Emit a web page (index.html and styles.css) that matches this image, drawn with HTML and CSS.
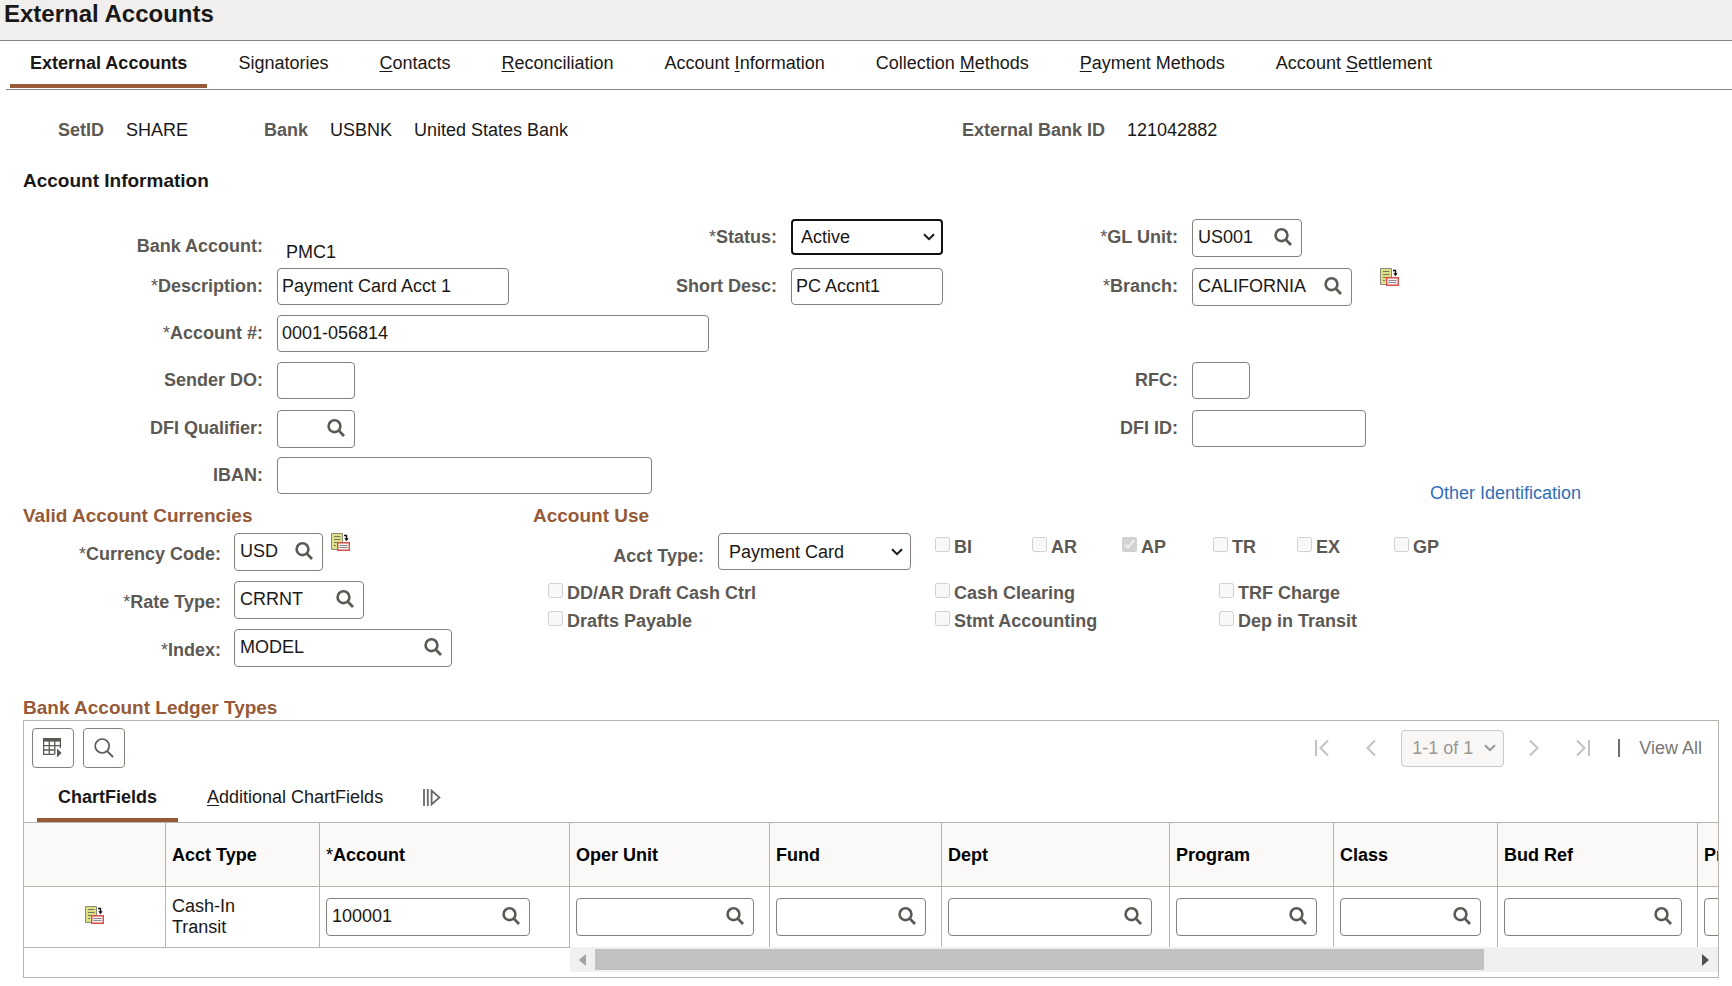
FILE: index.html
```html
<!DOCTYPE html>
<html lang="en">
<head>
<meta charset="utf-8">
<title>External Accounts</title>
<link rel="stylesheet" href="styles.css">
</head>
<body>
<svg class="sprite" aria-hidden="true">
  <symbol id="i-search" viewBox="0 0 18 18"><circle cx="7.5" cy="7.2" r="5.9" fill="none" stroke="currentColor" stroke-width="2.6"/><path d="M11.6 11.4 17 17" fill="none" stroke="currentColor" stroke-width="2.8"/></symbol>
  <symbol id="i-find" viewBox="0 0 20 20"><circle cx="8.2" cy="8" r="7" fill="none" stroke="currentColor" stroke-width="1.7"/><path d="M13.2 13.2 19 19" fill="none" stroke="currentColor" stroke-width="1.9"/></symbol>
  <symbol id="i-chevron" viewBox="0 0 12 8"><path d="M1 1.2 6 6.2 11 1.2" fill="none" stroke="currentColor" stroke-width="2"/></symbol>
  <symbol id="i-form" viewBox="0 0 19 18"><path d="M.5.5h11v16H.5z" fill="#dcdf86" stroke="#8a8a78"/><path d="M3 3.500h6.500M3 6.500h6.500M3 9.500h3M3 12.500h2" stroke="#77775a" stroke-width="1.1"/><path d="M13 2.500h2.500V6" fill="none" stroke="#111" stroke-width="1.4"/><path d="M13.300 5.200h4.400L15.500 8.200z" fill="#111"/><path d="M6.700 9.700h11.600v7.600H6.700z" fill="#f4f0f0" stroke="#d9504c" stroke-width="1.400"/><path d="M8.500 12.500h8M8.500 14.500h8" stroke="#8a898e" stroke-width="1"/></symbol>
  <symbol id="i-grid" viewBox="0 0 20 20"><path d="M0 0h18v3.600H0z" fill="currentColor"/><path d="M.6 3v13.400h10.600M17.400 3v7M6.300 3v13.400M11.800 3v13.400M0 7.600h18M0 12h12.500" fill="none" stroke="currentColor" stroke-width="1.300"/><path d="M14 10.600 18.600 15 14 19.600z" fill="currentColor"/></symbol>
</svg>

<header class="page-header"><h1>External Accounts</h1></header>

<nav class="tabs" aria-label="Pages">
  <a href="#" class="tab active" aria-current="page">External Accounts</a>
  <a href="#" class="tab">Signatories</a>
  <a href="#" class="tab"><u>C</u>ontacts</a>
  <a href="#" class="tab"><u>R</u>econciliation</a>
  <a href="#" class="tab">Account <u>I</u>nformation</a>
  <a href="#" class="tab">Collection <u>M</u>ethods</a>
  <a href="#" class="tab"><u>P</u>ayment Methods</a>
  <a href="#" class="tab">Account <u>S</u>ettlement</a>
</nav>

<main>
  <div class="keys">
    <div class="key"><span class="label">SetID</span><span>SHARE</span></div>
    <div class="key"><span class="label">Bank</span><span>USBNK</span><span>United States Bank</span></div>
    <div class="key"><span class="label">External Bank ID</span><span>121042882</span></div>
  </div>

  <h2 class="section-title">Account Information</h2>

  <div class="account-grid">
    <span class="label col-a low">Bank Account:</span>
    <span class="col-b static">PMC1</span>
    <label class="label col-c" for="status"><span class="req">*</span>Status:</label>
    <div class="select col-d focused"><select id="status"><option>Active</option><option>Inactive</option></select><svg class="chev"><use href="#i-chevron"/></svg></div>
    <label class="label col-e" for="glunit"><span class="req">*</span>GL Unit:</label>
    <div class="lookup col-f w-unit"><input id="glunit" type="text" value="US001"><button type="button" aria-label="Look up GL Unit"><svg><use href="#i-search"/></svg></button></div>

    <label class="label col-a" for="descr"><span class="req">*</span>Description:</label>
    <input class="text col-b" id="descr" type="text" value="Payment Card Acct 1">
    <label class="label col-c" for="short">Short Desc:</label>
    <input class="text col-d" id="short" type="text" value="PC Accnt1">
    <label class="label col-e" for="branch"><span class="req">*</span>Branch:</label>
    <div class="col-f with-icon">
      <div class="lookup w-branch"><input id="branch" type="text" value="CALIFORNIA"><button type="button" aria-label="Look up Branch"><svg><use href="#i-search"/></svg></button></div>
      <button type="button" class="form-btn" aria-label="Branch details"><svg><use href="#i-form"/></svg></button>
    </div>

    <label class="label col-a" for="acct"><span class="req">*</span>Account #:</label>
    <input class="text col-bc w-acct" id="acct" type="text" value="0001-056814">

    <label class="label col-a" for="sender">Sender DO:</label>
    <input class="text col-b w-short" id="sender" type="text">
    <label class="label col-e" for="rfc">RFC:</label>
    <input class="text col-f w-rfc" id="rfc" type="text">

    <label class="label col-a" for="dfiq">DFI Qualifier:</label>
    <div class="lookup col-b w-short"><input id="dfiq" type="text"><button type="button" aria-label="Look up DFI Qualifier"><svg><use href="#i-search"/></svg></button></div>
    <label class="label col-e" for="dfiid">DFI ID:</label>
    <input class="text col-f w-dfi" id="dfiid" type="text">

    <label class="label col-a" for="iban">IBAN:</label>
    <input class="text col-bc w-iban" id="iban" type="text">
    <a class="col-f other-id" href="#">Other Identification</a>
  </div>

  <div class="panels">
    <section>
      <h3 class="group-title">Valid Account Currencies</h3>
      <div class="currency-grid">
        <label class="label" for="cur"><span class="req">*</span>Currency Code:</label>
        <div class="with-icon near">
          <div class="lookup w-cur"><input id="cur" type="text" value="USD"><button type="button" aria-label="Look up Currency Code"><svg><use href="#i-search"/></svg></button></div>
          <button type="button" class="form-btn" aria-label="Currency details"><svg><use href="#i-form"/></svg></button>
        </div>
        <label class="label" for="rate"><span class="req">*</span>Rate Type:</label>
        <div class="lookup w-rate"><input id="rate" type="text" value="CRRNT"><button type="button" aria-label="Look up Rate Type"><svg><use href="#i-search"/></svg></button></div>
        <label class="label" for="index"><span class="req">*</span>Index:</label>
        <div class="lookup w-index"><input id="index" type="text" value="MODEL"><button type="button" aria-label="Look up Index"><svg><use href="#i-search"/></svg></button></div>
      </div>
    </section>

    <section>
      <h3 class="group-title">Account Use</h3>
      <div class="use-row">
        <label class="label" for="atype">Acct Type:</label>
        <div class="select"><select id="atype"><option>Payment Card</option></select><svg class="chev"><use href="#i-chevron"/></svg></div>
        <div class="flags">
          <label class="check"><input type="checkbox" disabled>BI</label>
          <label class="check"><input type="checkbox" disabled>AR</label>
          <label class="check"><input type="checkbox" disabled checked>AP</label>
          <label class="check"><input type="checkbox" disabled>TR</label>
          <label class="check"><input type="checkbox" disabled>EX</label>
          <label class="check"><input type="checkbox" disabled>GP</label>
        </div>
      </div>
      <div class="options">
        <label class="check"><input type="checkbox" disabled>DD/AR Draft Cash Ctrl</label>
        <label class="check"><input type="checkbox" disabled>Cash Clearing</label>
        <label class="check"><input type="checkbox" disabled>TRF Charge</label>
        <label class="check"><input type="checkbox" disabled>Drafts Payable</label>
        <label class="check"><input type="checkbox" disabled>Stmt Accounting</label>
        <label class="check"><input type="checkbox" disabled>Dep in Transit</label>
      </div>
    </section>
  </div>

  <section class="ledger">
    <h3 class="group-title">Bank Account Ledger Types</h3>
    <div class="ledger-box">
      <div class="toolbar">
        <button type="button" class="tool" aria-label="Grid actions"><svg><use href="#i-grid"/></svg></button>
        <button type="button" class="tool" aria-label="Find"><svg><use href="#i-find"/></svg></button>
        <div class="pager">
          <button type="button" class="page-btn" disabled aria-label="First"><svg viewBox="0 0 14 18"><path d="M1 1v16M13 1.500 5.500 9l7.500 7.500"/></svg></button>
          <button type="button" class="page-btn" disabled aria-label="Previous"><svg viewBox="0 0 14 18"><path d="M11 1.500 3.500 9l7.500 7.500"/></svg></button>
          <div class="select range"><select disabled aria-label="Rows"><option>1-1 of 1</option></select><svg class="chev"><use href="#i-chevron"/></svg></div>
          <button type="button" class="page-btn" disabled aria-label="Next"><svg viewBox="0 0 14 18"><path d="M3 1.500 10.500 9 3 16.500"/></svg></button>
          <button type="button" class="page-btn" disabled aria-label="Last"><svg viewBox="0 0 14 18"><path d="M13 1v16M1 1.500 8.500 9 1 16.500"/></svg></button>
          <span class="divider"></span>
          <button type="button" class="view-all" disabled>View All</button>
        </div>
      </div>
      <div class="grid-tabs">
        <a href="#" class="grid-tab active">ChartFields</a>
        <a href="#" class="grid-tab"><u>A</u>dditional ChartFields</a>
        <button type="button" class="expand" aria-label="Show all columns"><svg viewBox="0 0 18 17"><path d="M1 0v17M4.800 0v17M8.600 1.600v13.800L16.400 8.500z"/></svg></button>
      </div>
      <div class="table-wrap">
        <table>
          <colgroup><col class="c0"><col class="c1"><col class="c2"><col class="c3"><col class="c4"><col class="c5"><col class="c6"><col class="c6"><col class="c3"><col class="c3"></colgroup>
          <thead>
            <tr><th></th><th>Acct Type</th><th><span class="req">*</span>Account</th><th>Oper Unit</th><th>Fund</th><th>Dept</th><th>Program</th><th>Class</th><th>Bud Ref</th><th>Product</th></tr>
          </thead>
          <tbody>
            <tr>
              <td class="center"><button type="button" class="form-btn" aria-label="Row details"><svg><use href="#i-form"/></svg></button></td>
              <td>Cash-In<br>Transit</td>
              <td><div class="lookup w-t-acct"><input type="text" value="100001" aria-label="Account"><button type="button" aria-label="Look up Account"><svg><use href="#i-search"/></svg></button></div></td>
              <td><div class="lookup w-t-unit"><input type="text" aria-label="Oper Unit"><button type="button" aria-label="Look up Oper Unit"><svg><use href="#i-search"/></svg></button></div></td>
              <td><div class="lookup w-t-fund"><input type="text" aria-label="Fund"><button type="button" aria-label="Look up Fund"><svg><use href="#i-search"/></svg></button></div></td>
              <td><div class="lookup w-t-acct"><input type="text" aria-label="Dept"><button type="button" aria-label="Look up Dept"><svg><use href="#i-search"/></svg></button></div></td>
              <td><div class="lookup w-t-prog"><input type="text" aria-label="Program"><button type="button" aria-label="Look up Program"><svg><use href="#i-search"/></svg></button></div></td>
              <td><div class="lookup w-t-prog"><input type="text" aria-label="Class"><button type="button" aria-label="Look up Class"><svg><use href="#i-search"/></svg></button></div></td>
              <td><div class="lookup w-t-unit"><input type="text" aria-label="Bud Ref"><button type="button" aria-label="Look up Bud Ref"><svg><use href="#i-search"/></svg></button></div></td>
              <td><div class="lookup w-t-unit"><input type="text" aria-label="Product"><button type="button" aria-label="Look up Product"><svg><use href="#i-search"/></svg></button></div></td>
            </tr>
          </tbody>
        </table>
      </div>
      <div class="scroll-row">
        <div class="frozen-edge"></div>
        <div class="scrollbar">
          <svg class="arrow dim" viewBox="0 0 7 12"><path d="M7 0v12L0 6z"/></svg>
          <div class="track"><div class="thumb"></div></div>
          <svg class="arrow" viewBox="0 0 7 12"><path d="M0 0v12l7-6z"/></svg>
        </div>
      </div>
    </div>
  </section>
</main>
</body>
</html>
```

FILE: styles.css
```css
* { box-sizing: border-box; }

body {
  margin: 0;
  background: #fff;
  color: #1a1816;
  font: 18px/22px "Liberation Sans", Arial, sans-serif;
}

h1, h2, h3 { margin: 0; }

input, select, button { font: inherit; color: inherit; }

button {
  padding: 0;
  border: 0;
  background: none;
}

.sprite { display: none; }

.page-header {
  height: 41px;
  padding-left: 4px;
  border-bottom: 1px solid #84817e;
  background: #f0efed;
}

.page-header h1 {
  font-size: 24px;
  line-height: 28px;
}

.tabs {
  display: flex;
  gap: 11px;
  margin-left: 6px;
  padding: 0 4px 1px;
  border-bottom: 1px solid #84817e;
}

.tab {
  padding: 11px 20px 10px;
  border-bottom: 4px solid transparent;
  color: inherit;
  text-decoration: none;
  white-space: nowrap;
}

.tab.active, .grid-tab.active {
  border-color: #955a38;
  font-weight: bold;
}

.tab u, .grid-tab u { text-underline-offset: 2px; }

main { padding-left: 23px; }

.label {
  color: #5c5955;
  font-weight: bold;
}

.req { font-weight: normal; }

.keys {
  display: grid;
  grid-template-columns: 206fr 698fr 770fr;
  padding: 29px 0 0 35px;
}

.key {
  display: flex;
  gap: 22px;
  white-space: nowrap;
}

.section-title {
  margin: 29px 0 27px;
  font-size: 19px;
  line-height: 22px;
}

.account-grid {
  display: grid;
  grid-template-columns: 240fr 232fr 254fr 152fr 221fr 540fr;
  grid-template-rows: 49px 47px 47px 48px 47px 47px;
  column-gap: 14px;
  align-items: start;
}

.account-grid .label {
  line-height: 36px;
  text-align: right;
  white-space: nowrap;
}

.account-grid .low {
  align-self: end;
  line-height: 44px;
}

.static {
  align-self: end;
  padding-left: 9px;
  line-height: 32px;
}

.col-a { grid-column: 1; }
.col-b { grid-column: 2; }
.col-bc { grid-column: 2 / 4; }
.col-c { grid-column: 3; }
.col-d { grid-column: 4; }
.col-e { grid-column: 5; }
.col-f { grid-column: 6; }

.text, .lookup, .select select {
  width: 100%;
  height: 37px;
  border: 1px solid #85807b;
  border-radius: 4px;
  background: #fff;
}

.text { padding: 0 4px; }

.lookup {
  display: flex;
  align-items: center;
  height: 38px;
  padding: 0 9px 2px 5px;
}

.lookup input {
  flex: 1;
  min-width: 0;
  padding: 0;
  border: 0;
  background: none;
  outline: 0;
}

.lookup button {
  color: #5c5955;
  line-height: 0;
}

.lookup svg { width: 18px; height: 18px; }

.select {
  display: grid;
  align-items: center;
}

.select > * { grid-area: 1 / 1; }

.select select {
  appearance: none;
  padding: 0 10px;
  opacity: 1;
}

.select.focused select {
  height: 36px;
  padding: 0 8px;
  border: 2px solid #111;
}

.chev {
  width: 12px;
  height: 8px;
  margin-right: 8px;
  justify-self: end;
  pointer-events: none;
}

.with-icon {
  display: flex;
  gap: 28px;
  align-items: flex-start;
}

.with-icon.near { gap: 8px; }

.form-btn { line-height: 0; }
.form-btn svg { width: 19px; height: 18px; }

.w-unit { max-width: 110px; }
.w-branch { max-width: 160px; }
.w-acct { max-width: 432px; }
.w-short { max-width: 78px; }
.w-rfc { max-width: 58px; }
.w-dfi { max-width: 174px; }
.w-iban { max-width: 375px; }
.w-cur { max-width: 89px; }
.w-rate { max-width: 130px; }
.w-index { max-width: 218px; }
.w-t-acct { max-width: 204px; }
.w-t-unit { max-width: 178px; }
.w-t-fund { max-width: 150px; }
.w-t-prog { max-width: 141px; }

.other-id {
  align-self: end;
  justify-self: end;
  margin-right: 151px;
  color: #2f6eb6;
  text-decoration: none;
}

.panels {
  display: grid;
  grid-template-columns: 510fr 1199fr;
}

.group-title {
  color: #955a38;
  font-size: 19px;
  line-height: 24px;
}

.currency-grid {
  display: grid;
  grid-template-columns: 198px 1fr;
  gap: 10px 13px;
  align-items: center;
  margin-top: 5px;
}

.currency-grid .label {
  padding-top: 3px;
  text-align: right;
}

.use-row {
  display: grid;
  grid-template-columns: 171px 193px 1fr;
  column-gap: 14px;
  align-items: center;
  margin-top: 5px;
}

.use-row .label {
  padding-top: 8px;
  text-align: right;
}

.flags {
  display: grid;
  grid-template-columns: 97fr 90fr 91fr 84fr 97fr 338fr;
  align-self: start;
  padding: 4px 0 0 10px;
}

.options {
  display: grid;
  grid-template-columns: 387fr 284fr 513fr;
  row-gap: 8px;
  margin-top: 13px;
  padding-left: 15px;
}

.check {
  display: flex;
  gap: 4px;
  align-items: flex-start;
  color: #5c5955;
  font-weight: bold;
  line-height: 20px;
  white-space: nowrap;
}

.check input {
  width: 15px;
  height: 15px;
  margin: 0;
}

.ledger { margin: 29px 13px 7px 0; }

.ledger-box {
  padding-bottom: 5px;
  border: 1px solid #b9b3ae;
}

.toolbar {
  display: flex;
  gap: 9px;
  align-items: center;
  padding: 7px 16px 0 8px;
}

.tool {
  width: 42px;
  height: 40px;
  border: 1px solid #85807b;
  border-radius: 4px;
  color: #5c5955;
  line-height: 0;
}

.tool svg { width: 20px; height: 20px; }

.pager {
  display: flex;
  align-items: center;
  margin-left: auto;
}

.page-btn {
  margin-right: 35px;
  line-height: 0;
}

.page-btn svg {
  width: 14px;
  height: 18px;
  fill: none;
  stroke: #c4c2c0;
  stroke-width: 2;
}

.range {
  width: 103px;
  margin: 0 23px 0 -12px;
  color: #9a9794;
}

.range select {
  border-color: #cbc8c5;
  background: #f8f7f6;
}

.divider {
  width: 2px;
  height: 18px;
  margin: 0 19px 0 -7px;
  background: #6f6c69;
}

.view-all { color: #7a7774; }

.grid-tabs {
  display: flex;
  gap: 8px;
  align-items: center;
  height: 54px;
  padding: 4px 0 0 13px;
}

.grid-tab {
  height: 50px;
  padding: 14px 21px 0;
  border-bottom: 4px solid transparent;
  color: inherit;
  text-decoration: none;
}

.expand {
  margin-left: 11px;
  line-height: 0;
}

.expand svg {
  width: 18px;
  height: 17px;
  fill: none;
  stroke: #6b6865;
  stroke-width: 1.8;
}

.table-wrap { overflow: hidden; }

table {
  width: 1873px;
  table-layout: fixed;
  border-collapse: separate;
  border-spacing: 0;
}

.c0 { width: 141px; }
.c1 { width: 154px; }
.c2 { width: 250px; }
.c3 { width: 200px; }
.c4 { width: 172px; }
.c5 { width: 228px; }
.c6 { width: 164px; }

th, td {
  padding: 0 6px;
  border-top: 1px solid #b9b3ae;
  border-left: 1px solid #b9b3ae;
  text-align: left;
}

th:first-child, td:first-child { border-left: 0; }

th {
  height: 64px;
  background: #faf9f7;
  color: #000;
}

td {
  height: 61px;
  line-height: 21px;
}

.center { text-align: center; }

.scroll-row { display: flex; }

.frozen-edge {
  width: 546px;
  border-top: 1px solid #b9b3ae;
}

.scrollbar {
  display: flex;
  flex: 1;
  align-items: center;
  height: 25px;
  padding: 2px 9px;
  background: #f0f0f0;
}

.arrow {
  width: 7px;
  height: 12px;
  fill: #505050;
}

.arrow.dim { fill: #a3a3a3; }

.track {
  flex: 1;
  height: 21px;
  margin: 0 9px;
}

.thumb {
  width: 81%;
  height: 21px;
  background: #c1c1c1;
}
```
